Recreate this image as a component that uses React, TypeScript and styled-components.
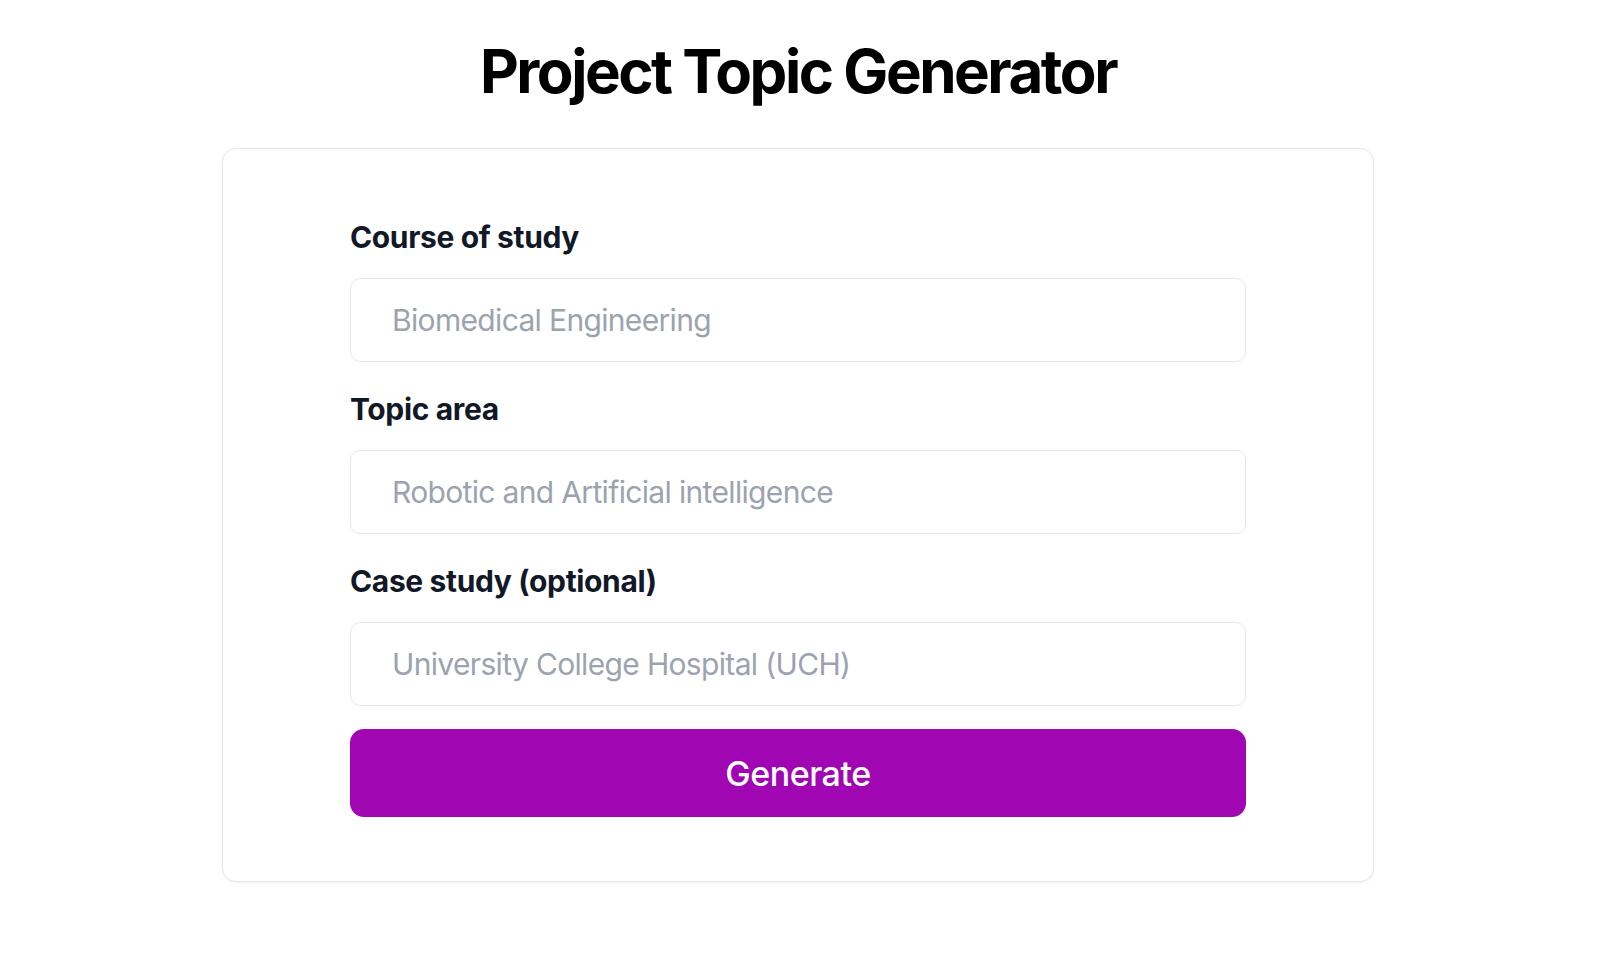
import React, { useState, ChangeEvent } from 'react';
import styled, { createGlobalStyle } from 'styled-components';

const GlobalStyle = createGlobalStyle`
  * {
    box-sizing: border-box;
  }
  body {
    margin: 0;
    background: #fff;
    font-family: Inter, 'Noto Sans', sans-serif;
  }
`;

const fields = [
  { id: 'course', label: 'Course of study', placeholder: 'Biomedical Engineering' },
  { id: 'topic', label: 'Topic area', placeholder: 'Robotic and Artificial intelligence' },
  { id: 'case', label: 'Case study (optional)', placeholder: 'University College Hospital (UCH)' },
];

const App: React.FC = () => {
  const [values, setValues] = useState<Record<string, string>>({});

  const onChange = (e: ChangeEvent<HTMLInputElement>) => {
    setValues({ ...values, [e.target.name]: e.target.value });
  };

  return (
    <Page>
      <GlobalStyle />
      <Title>Project Topic Generator</Title>
      <Card>
        <Form onSubmit={(e) => e.preventDefault()}>
          {fields.map((field, index) => (
            <Field key={field.id} $last={index === fields.length - 1}>
              <Label htmlFor={field.id}>{field.label}</Label>
              <Input
                id={field.id}
                name={field.id}
                placeholder={field.placeholder}
                value={values[field.id] || ''}
                onChange={onChange}
              />
            </Field>
          ))}
          <Button type="submit">Generate</Button>
        </Form>
      </Card>
    </Page>
  );
};

export default App;

const Page = styled.div`
  padding: 41px 12px 40px 0;
`;

const Title = styled.h1`
  margin: 0 0 47px;
  text-align: center;
  font-size: 60px;
  line-height: 60px;
  font-weight: 700;
  letter-spacing: -0.041em;
  color: #000;
`;

const Card = styled.div`
  max-width: 1152px;
  margin: 0 auto;
  padding: 70px 127px 64px;
  border: 1px solid #e4e7ef;
  border-radius: 14px;
  background: #fff;
  box-shadow: 0 1px 3px rgba(15, 23, 42, 0.06);
`;

const Form = styled.form`
  display: flex;
  flex-direction: column;
`;

const Field = styled.div<{ $last?: boolean }>`
  display: flex;
  flex-direction: column;
  gap: 23px;
  margin-bottom: ${({ $last }) => ($last ? '23px' : '29px')};
`;

const Label = styled.label`
  font-size: 30px;
  line-height: 36px;
  font-weight: 700;
  letter-spacing: -0.012em;
  color: #111827;
`;

const Input = styled.input`
  height: 84px;
  width: 100%;
  padding: 0 41px;
  border: 1px solid #e2e6ee;
  border-radius: 10px;
  font-family: Inter, 'Noto Sans', sans-serif;
  font-size: 30px;
  letter-spacing: -0.022em;
  color: #111827;
  outline: none;

  &::placeholder {
    color: #9ca3af;
  }
`;

const Button = styled.button`
  height: 88px;
  width: 100%;
  border: none;
  border-radius: 14px;
  background: #a006b1;
  color: #fff;
  font-family: Inter, 'Noto Sans', sans-serif;
  font-size: 34px;
  font-weight: 500;
  letter-spacing: -0.015em;
  cursor: pointer;
`;
